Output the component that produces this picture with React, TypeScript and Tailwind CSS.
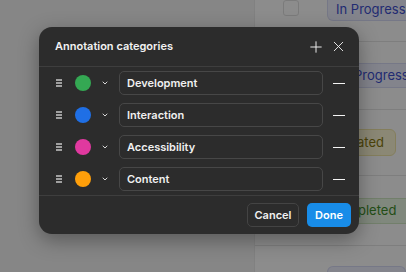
import { Plus, X } from "lucide-react";

const categories = [
  { name: "Development", color: "bg-[#34a853]" },
  { name: "Interaction", color: "bg-[#1f6fe5]" },
  { name: "Accessibility", color: "bg-[#e0399f]" },
  { name: "Content", color: "bg-[#ff9f0a]" },
];

function Handle() {
  return (
    <div className="flex w-[6px] flex-col gap-[1px]">
      <span className="h-[2px] bg-[#a0a0a0]" />
      <span className="h-[2px] bg-[#a0a0a0]" />
      <span className="h-[2px] bg-[#a0a0a0]" />
    </div>
  );
}

function Chevron() {
  return (
    <svg width="6" height="4" viewBox="0 0 6 4" fill="none">
      <path d="M1 1l2 2 2-2" stroke="#d8d8d8" strokeWidth="1" strokeLinecap="round" strokeLinejoin="round" />
    </svg>
  );
}

export default function App() {
  return (
    <div className="relative h-[272px] w-[406px] overflow-hidden bg-[#f5f5f5] font-['Inter',sans-serif]">
      {/* Page behind the dialog */}
      <div className="flex h-full">
        <div className="w-[255px] shrink-0 border-r border-[#ececec]" />
        <div className="flex min-w-0 flex-1 flex-col">
          <div className="flex h-[42px] shrink-0 items-start border-b border-[#e6e6e6] bg-white">
            <div className="ml-[28px] h-[16px] w-[16px] shrink-0 rounded-[3px] border border-[#e0e0e0]" />
            <div className="ml-[28px] flex h-[21px] shrink-0 items-center rounded-b-[6px] border border-t-0 border-[#d8dbf6] bg-[#eef0ff] px-[8px] text-[13px] text-[#3d4fd0]">
              In Progress
            </div>
          </div>
          <div className="flex h-[68px] shrink-0 items-center border-b border-[#e6e6e6] bg-white">
            <div className="ml-[40px] flex h-[25px] shrink-0 items-center rounded-[6px] border border-[#d8dbf6] bg-[#eef0ff] pl-[58px] pr-[8px] text-[13px] text-[#3d4fd0]">
              Progress
            </div>
          </div>
          <div className="flex h-[66px] shrink-0 items-center border-b border-[#e6e6e6] bg-white">
            <div className="ml-[40px] flex h-[27px] w-[101px] shrink-0 items-center justify-end rounded-[6px] border border-[#f0e6a8] bg-[#fdf8d6] pr-[11px] text-[13px] text-[#8a7a10]">
              ated
            </div>
          </div>
          <div className="flex h-[70px] shrink-0 items-center border-b border-[#e6e6e6] bg-white">
            <div className="ml-[40px] flex h-[26px] flex-1 items-center rounded-l-[6px] border border-r-0 border-[#cfe8c4] bg-[#eaf7e4] pl-[62px] text-[13px] text-[#3f8f2a]">
              pleted
            </div>
          </div>
          <div className="flex flex-1 items-end bg-white">
            <div className="ml-[72px] h-[6px] flex-1 rounded-t-[6px] border border-b-0 border-[#d8dbf6] bg-[#eef0ff]" />
          </div>
        </div>
      </div>

      {/* Scrim */}
      <div className="absolute inset-0 bg-black/[0.45]" />

      {/* Dialog */}
      <div className="absolute left-[39px] top-[27px] flex w-[320px] flex-col rounded-[13px] bg-[#2c2c2c] text-white shadow-[0_6px_20px_rgba(0,0,0,0.35)]">
        <div className="flex h-[40px] items-center border-b border-[#3e3e3e] pl-[16px] pr-[12px]">
          <span className="flex-1 text-[11px] font-semibold text-[#f2f2f2]">Annotation categories</span>
          <Plus size={18} strokeWidth={1.3} className="text-[#f0f0f0]" />
          <X size={17} strokeWidth={1.3} className="ml-[5px] text-[#f0f0f0]" />
        </div>

        <div className="flex flex-col">
          {categories.map((c) => (
            <div key={c.name} className="flex h-[32px] items-center pl-[17px] pr-[14px]">
              <Handle />
              <span className={`ml-[13px] h-[16px] w-[16px] rounded-full ${c.color}`} />
              <span className="ml-[10px] flex w-[8px] justify-center">
                <Chevron />
              </span>
              <div className="ml-[10px] flex h-[24px] w-[204px] items-center rounded-[5px] border border-[#474747] px-[7px] text-[11px] font-semibold text-[#f0f0f0]">
                {c.name}
              </div>
              <span className="ml-[10px] h-px w-[12px] bg-[#f4f4f4]" />
            </div>
          ))}
        </div>

        <div className="flex h-[39px] items-center justify-end gap-[8px] border-t border-[#3e3e3e] pr-[8px]">
          <button className="h-[24px] w-[52px] rounded-[5px] border border-[#444] text-[11px] font-semibold text-[#f0f0f0]">
            Cancel
          </button>
          <button className="h-[24px] w-[44px] rounded-[5px] bg-[#188ce8] text-[11px] font-semibold text-white">
            Done
          </button>
        </div>
      </div>
    </div>
  );
}
